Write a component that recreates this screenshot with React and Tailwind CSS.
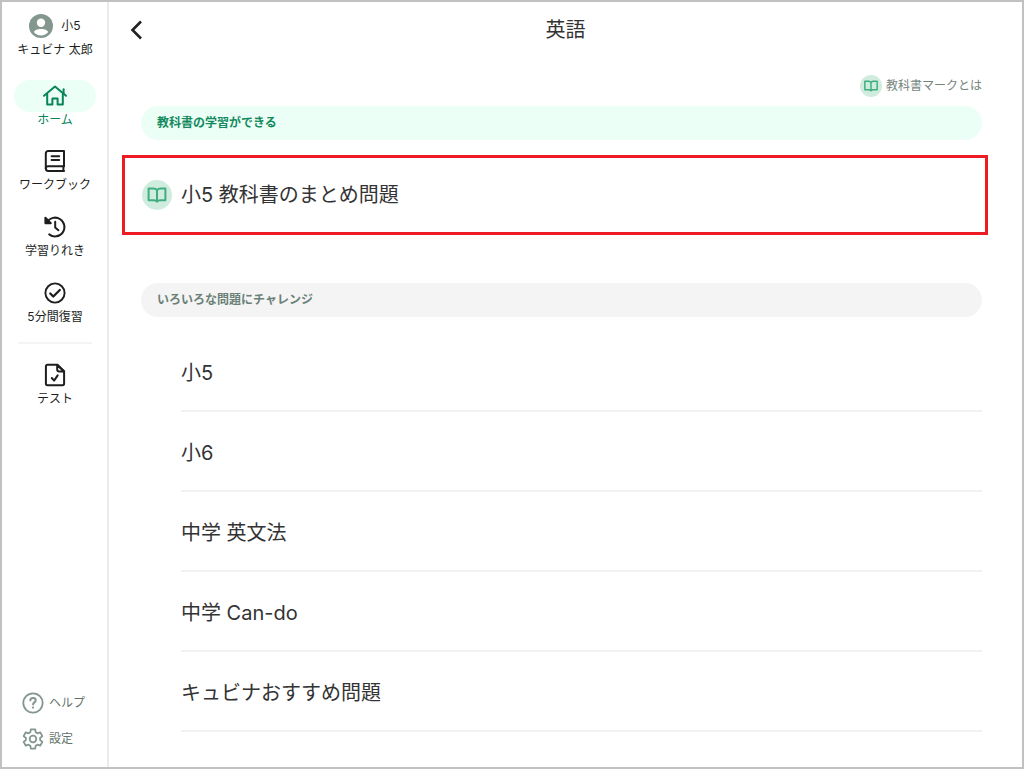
const navItems = [
  { id: "workbook", label: "ワークブック", icon: WorkbookIcon },
  { id: "history", label: "学習りれき", icon: HistoryIcon },
  { id: "review", label: "5分間復習", icon: ReviewIcon },
];

const challenges = ["小5", "小6", "中学 英文法", "中学 Can-do", "キュビナおすすめ問題"];

function UserIcon() {
  return (
    <svg viewBox="0 0 24 24" className="size-6" aria-hidden="true">
      <circle cx="12" cy="12" r="12" fill="#84978f" />
      <circle cx="12" cy="8.8" r="4.2" fill="#fff" />
      <path d="M12 15c4 0 7 1.4 7 3.2-1.4 2-4 3.2-7 3.2s-5.600-1.200-7-3.200C5 16.400 8 15 12 15z" fill="#fff" />
    </svg>
  );
}

function HomeIcon() {
  return (
    <svg viewBox="0 0 24 24" className="size-6" fill="none" stroke="currentColor" strokeWidth="2" strokeLinecap="round" strokeLinejoin="round" aria-hidden="true">
      <path d="M1 11.800L12 2.600l11 9.200" />
      <path d="M4.200 10v10.600h5.200v-6.200h5.200v6.200h5.200V10" />
      <path d="M20.600 9.300V5.200" />
    </svg>
  );
}

function WorkbookIcon() {
  return (
    <svg viewBox="0 0 24 24" className="size-6" fill="none" stroke="currentColor" strokeWidth="2" strokeLinecap="round" strokeLinejoin="round" aria-hidden="true">
      <path d="M21 17.200V2H5.200a2.400 2.400 0 0 0-2.400 2.400v15.200A2.400 2.400 0 0 0 5.200 22H21" />
      <path d="M2.800 19.600c0-1.400 1-2.400 2.400-2.400H21" />
      <path d="M20.400 17.200V22" />
      <path d="M8.600 7.200h7.600M8.600 11h7.600" />
    </svg>
  );
}

function HistoryIcon() {
  return (
    <svg viewBox="0 0 24 24" className="size-6" fill="none" stroke="currentColor" strokeWidth="2" strokeLinecap="round" strokeLinejoin="round" aria-hidden="true">
      <path d="M4 7.200A9.400 9.400 0 1 1 6.200 19.400" />
      <path d="M2.400 2.800v5.400h5.400z" fill="currentColor" />
      <path d="M12.200 6.800v5.600l3.200 2.800" />
    </svg>
  );
}

function ReviewIcon() {
  return (
    <svg viewBox="0 0 24 24" className="size-6" fill="none" stroke="currentColor" strokeLinecap="round" strokeLinejoin="round" aria-hidden="true">
      <circle cx="12" cy="12" r="9.600" strokeWidth="1.900" />
      <path d="M7.300 12.500l3 3 6.500-6.500" strokeWidth="2.300" />
    </svg>
  );
}

function TestIcon() {
  return (
    <svg viewBox="0 0 24 24" className="size-6" fill="none" stroke="currentColor" strokeWidth="2" strokeLinecap="round" strokeLinejoin="round" aria-hidden="true">
      <path d="M14.400 1.800H4.500a1.600 1.600 0 0 0-1.600 1.600v17.200a1.600 1.600 0 0 0 1.600 1.600h15a1.600 1.600 0 0 0 1.600-1.600V8.200z" />
      <path d="M14.200 2v4.400a2 2 0 0 0 2 2h4.700z" />
      <path d="M8.800 15l2.300 2.600 3.600-5.200" />
    </svg>
  );
}

function HelpIcon() {
  return (
    <svg viewBox="0 0 24 24" className="size-6" fill="none" stroke="currentColor" strokeLinecap="round" strokeLinejoin="round" aria-hidden="true">
      <circle cx="12" cy="12" r="9.700" strokeWidth="1.800" />
      <path d="M9.300 9.300c.2-1.500 1.300-2.200 2.700-2.200 1.600 0 2.700.9 2.700 2.300 0 2-2.600 2-2.600 4" strokeWidth="2" />
      <circle cx="12" cy="16.600" r=".5" fill="currentColor" strokeWidth="1.300" />
    </svg>
  );
}

// six teeth, one every 60 degrees from the top
const gearPoints = [0, 60, 120, 180, 240, 300].flatMap((tooth) =>
  [[-22, 7.2], [-13, 9.8], [13, 9.8], [22, 7.2]].map(([offset, r]) => {
    const a = ((tooth + offset - 90) * Math.PI) / 180;
    return `${(12 + r * Math.cos(a)).toFixed(2)},${(12 + r * Math.sin(a)).toFixed(2)}`;
  })
).join(" ");

function SettingsIcon() {
  return (
    <svg viewBox="0 0 24 24" className="size-6" fill="none" stroke="currentColor" strokeWidth="1.800" strokeLinejoin="round" aria-hidden="true">
      <polygon points={gearPoints} />
      <circle cx="12" cy="12" r="3.300" />
    </svg>
  );
}

function BookMark({ className }) {
  return (
    <svg viewBox="0 0 30 30" className={className} aria-hidden="true">
      <circle cx="15" cy="15" r="15" fill="#d0ecdf" />
      <path
        d="M15 10.200c-.8-1-2.100-1.600-3.600-1.600H6.600v11.600h5.200c1.400 0 2.500.5 3.200 1.400.7-.9 1.800-1.400 3.200-1.400h5.200V8.600h-4.800c-1.500 0-2.800.6-3.600 1.600zM15 10.200v11.200"
        fill="none" stroke="#3fad80" strokeWidth="2" strokeLinecap="round" strokeLinejoin="round"
      />
    </svg>
  );
}

function Sidebar() {
  return (
    <aside className="flex w-[107px] shrink-0 flex-col items-center border-r-2 border-[#e6edeb] pt-3 pb-4 pl-px text-xs text-[#1d1f1e]">
      <div className="flex items-center gap-2">
        <UserIcon />
        <span>小5</span>
      </div>
      <p className="mt-1 leading-4">キュビナ 太郎</p>

      <nav className="mt-[22px] flex w-full flex-col items-center">
        <a href="#home" aria-current="page" className="flex flex-col items-center text-[#078558]">
          <span className="flex h-8 w-[82px] items-center justify-center rounded-full bg-[#ebfff6]"><HomeIcon /></span>
          <span className="leading-4">ホーム</span>
        </a>
        <div className="mt-[21px] flex flex-col items-center gap-[22px]">
          {navItems.map(({ id, label, icon: Icon }) => (
            <a key={id} href={`#${id}`} className="flex flex-col items-center gap-1">
              <Icon />
              <span className="leading-4">{label}</span>
            </a>
          ))}
        </div>
        <hr className="mt-[17px] w-[74px] border-t-2 border-[#f3f4f4]" />
        <a href="#test" className="mt-[19px] flex flex-col items-center gap-1">
          <TestIcon />
          <span className="leading-4">テスト</span>
        </a>
      </nav>

      <div className="mt-auto flex w-full flex-col gap-3 pl-[18px] text-[#5f746b]">
        <a href="#help" className="flex items-center gap-1"><span className="text-[#84978f]"><HelpIcon /></span>ヘルプ</a>
        <a href="#settings" className="flex items-center gap-1"><span className="text-[#84978f]"><SettingsIcon /></span>設定</a>
      </div>
    </aside>
  );
}

export default function App() {
  return (
    <div className="flex min-h-screen border-2 border-[#c1c1c1] bg-white font-['Inter','Noto_Sans_CJK_JP',sans-serif]">
      <Sidebar />
      <main className="min-w-0 flex-1 pr-[34px] pl-[13px]">
        <header className="-mr-[21px] grid h-14 grid-cols-[1fr_auto_1fr] items-center">
          <button type="button" aria-label="もどる" className="flex size-7 items-center justify-center text-[#222] cursor-pointer">
            <svg viewBox="0 0 24 24" className="size-6" fill="none" stroke="currentColor" strokeWidth="2.600" aria-hidden="true">
              <path d="M17 3.500L8.500 12l8.500 8.500" />
            </svg>
          </button>
          <h1 className="text-xl text-[#333]">英語</h1>
        </header>

        <div className="mt-[17px] mr-[6px] flex justify-end">
          <a href="#about-mark" className="flex items-center gap-1 text-xs text-[#75857e]">
            <BookMark className="size-[22px]" />
            教科書マークとは
          </a>
        </div>

        <section>
          <h2 className="mt-[9px] mr-[6px] ml-[19px] rounded-full bg-[#ebfff6] px-4 py-2 text-xs leading-[18px] font-bold text-[#148a5e]">教科書の学習ができる</h2>
          <a href="#summary" className="mt-[15px] flex h-20 items-center gap-[9px] border-3 border-[#ed1c24] px-[17px] text-xl text-[#333]">
            <BookMark className="size-[30px]" />
            小5 教科書のまとめ問題
          </a>
        </section>

        <section className="mt-12 mr-[6px] ml-[19px]">
          <h2 className="rounded-full bg-[#f4f4f4] px-4 py-2 text-xs leading-[18px] font-bold text-[#6a8077]">いろいろな問題にチャレンジ</h2>
          <ul className="mt-[15px] ml-10">
            {challenges.map((title) => (
              <li key={title}>
                <a href="#challenge" className="flex h-20 items-center border-b-2 border-[#f1f1f1] pt-[3px] text-xl text-[#333]">{title}</a>
              </li>
            ))}
          </ul>
        </section>
      </main>
    </div>
  );
}
